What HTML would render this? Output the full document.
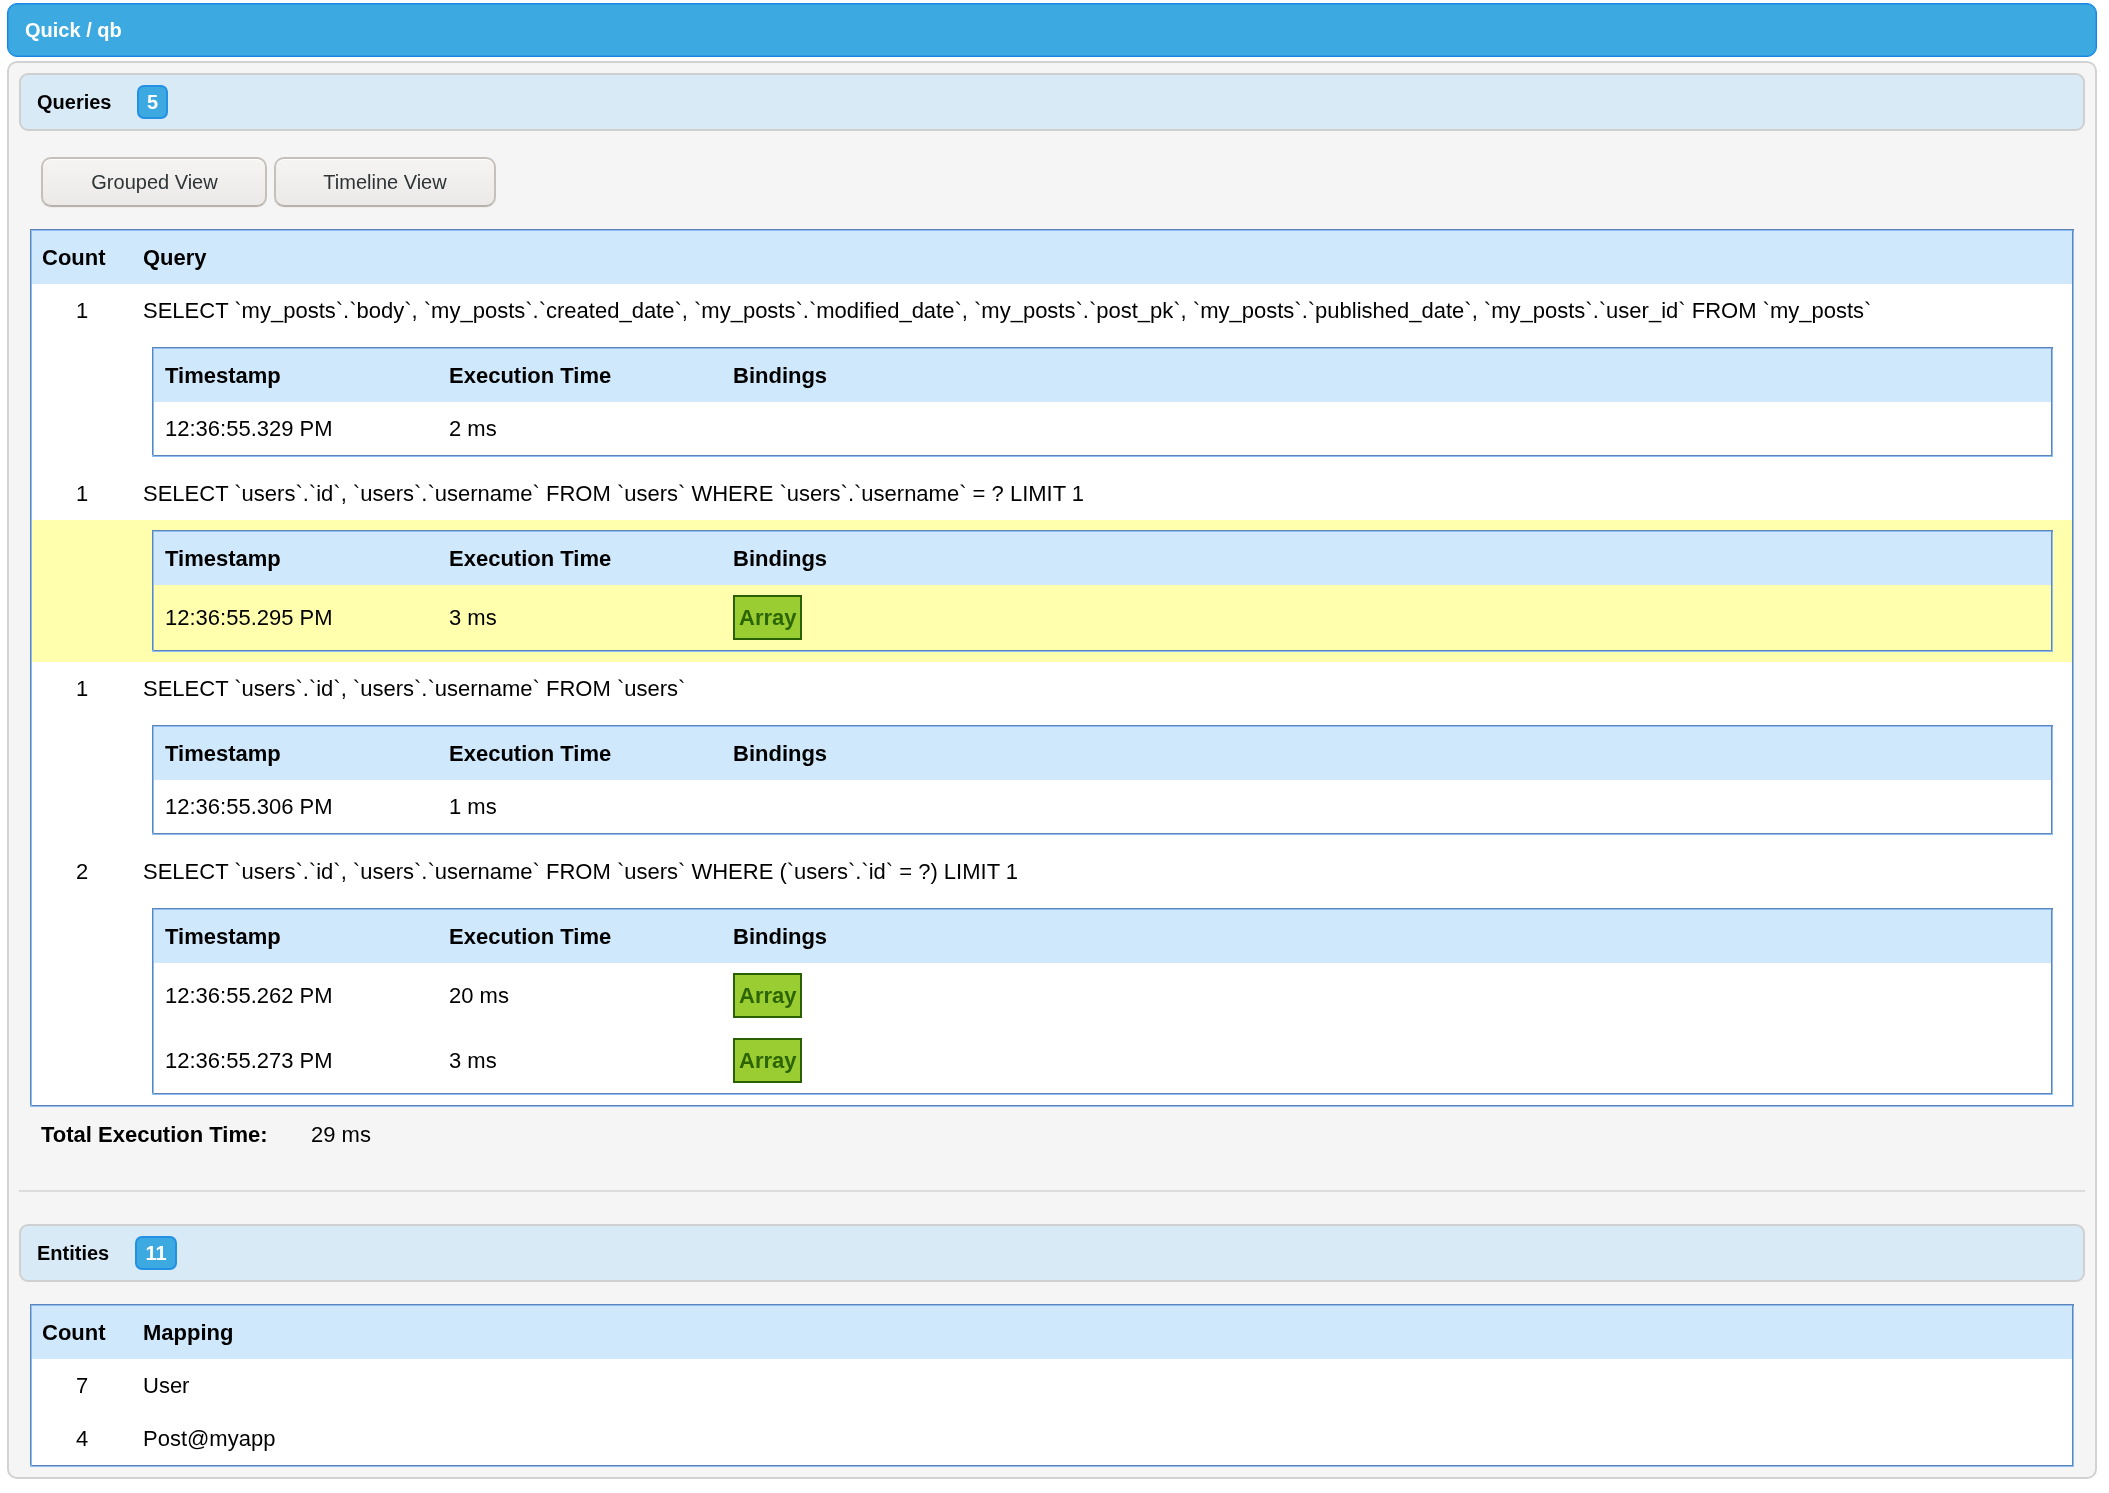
<!DOCTYPE html>
<html>
<head>
<meta charset="utf-8">
<style>
html,body{margin:0;padding:0;background:#fff;}
body{width:2109px;height:1493px;position:relative;overflow:hidden;font-family:"Liberation Sans",sans-serif;color:#000;}
.hdr{position:absolute;left:7px;top:3px;width:2088px;height:52px;border:1px solid #1785e3;border-radius:10px;background:#3ca9e1;box-shadow:inset 0 0 0 1px #2b9be3;}
.hdr span{position:absolute;left:17px;top:15px;font-size:20px;font-weight:bold;color:#fff;line-height:23px;}
.panel{position:absolute;left:7px;top:61px;width:2086px;height:1414px;border:2px solid #d2d2d2;border-radius:10px;background:#f5f5f5;}
.box{position:absolute;left:10px;width:2062px;height:54px;border:2px solid #d0d0d0;border-radius:9px;background:#d9eaf7;}
.box .t{position:absolute;left:16px;top:16px;font-size:20px;font-weight:bold;line-height:23px;}
.badge{position:absolute;top:10px;height:30px;border:2px solid #2390e6;border-radius:7px;background:#3ca9e1;color:#fff;font-size:20px;font-weight:bold;text-align:center;line-height:30px;}
.btn{position:absolute;top:94px;height:46px;border:2px solid #c6c0ba;border-bottom-color:#b9b1ab;border-radius:10px;background:linear-gradient(#f5f4f3,#ebeae8);color:#2e3436;font-size:20px;text-align:center;line-height:46px;box-shadow:inset 0 1px 0 #fff,0 1px 1px rgba(0,0,0,0.04);}
table{border-collapse:separate;border-spacing:0;font-size:22px;line-height:33px;}
table.o{position:absolute;left:22px;width:2042px;border:1px solid;border-color:#8dbdf5 #5f84b6 #5f84b6 #8dbdf5;box-shadow:-1px -1px 0 #5f84b6,1px 1px 0 #8dbdf5,1px -1px 0 #5f84b6,-1px 1px 0 #8dbdf5;background:#fff;}
th{font-weight:bold;text-align:left;background:#cfe8fc;padding:10px;}
td{padding:10px;vertical-align:baseline;}
table.o>tbody>tr>*:nth-child(2){padding-left:11px;}
td.c{text-align:center;width:80px;}
table.i{width:1899px;border:1px solid;border-color:#8dbdf5 #5f84b6 #5f84b6 #8dbdf5;box-shadow:-1px -1px 0 #5f84b6,1px 1px 0 #8dbdf5,1px -1px 0 #5f84b6,-1px 1px 0 #8dbdf5;margin:1px 0 1px 10px;background:#fff;}
table.i tr>*:nth-child(1){width:263px;padding-left:11px;}
table.i tr>*:nth-child(2){width:264px;padding-left:11px;}
table.i th, table.i td{padding:10px;}
tr.y td{background:#ffffad;}
.arr{display:inline-block;border:2px solid #2a6000;background:#9acd32;color:#2c6500;font-weight:bold;padding:4px;line-height:33px;vertical-align:baseline;}
.tot{position:absolute;left:32px;top:1055px;font-size:22px;line-height:33px;}
.sep{position:absolute;left:10px;top:1127px;width:2066px;height:2px;background:#dcdcdc;}
</style>
</head>
<body><div id="wrap" style="position:absolute;left:0;top:0;width:2109px;height:1493px;will-change:transform">
<div class="hdr"><span>Quick / qb</span></div>
<div class="panel">
  <div class="box" style="top:10px"><span class="t">Queries</span><span class="badge" style="left:116px;width:27px">5</span></div>
  <div class="btn" style="left:32px;width:222px;text-indent:1px">Grouped View</div>
  <div class="btn" style="left:265px;width:218px">Timeline View</div>
  <table class="o" style="top:167px">
    <tr><th style="width:80px">Count</th><th>Query</th></tr>
    <tr><td class="c">1</td><td>SELECT `my_posts`.`body`, `my_posts`.`created_date`, `my_posts`.`modified_date`, `my_posts`.`post_pk`, `my_posts`.`published_date`, `my_posts`.`user_id` FROM `my_posts`</td></tr>
    <tr><td></td><td>
      <table class="i"><tr><th>Timestamp</th><th>Execution Time</th><th>Bindings</th></tr>
      <tr><td>12:36:55.329 PM</td><td>2 ms</td><td></td></tr></table>
    </td></tr>
    <tr><td class="c">1</td><td>SELECT `users`.`id`, `users`.`username` FROM `users` WHERE `users`.`username` = ? LIMIT 1</td></tr>
    <tr class="y"><td></td><td>
      <table class="i"><tr><th>Timestamp</th><th>Execution Time</th><th>Bindings</th></tr>
      <tr><td>12:36:55.295 PM</td><td>3 ms</td><td><span class="arr">Array</span></td></tr></table>
    </td></tr>
    <tr><td class="c">1</td><td>SELECT `users`.`id`, `users`.`username` FROM `users`</td></tr>
    <tr><td></td><td>
      <table class="i"><tr><th>Timestamp</th><th>Execution Time</th><th>Bindings</th></tr>
      <tr><td>12:36:55.306 PM</td><td>1 ms</td><td></td></tr></table>
    </td></tr>
    <tr><td class="c">2</td><td>SELECT `users`.`id`, `users`.`username` FROM `users` WHERE (`users`.`id` = ?) LIMIT 1</td></tr>
    <tr><td></td><td>
      <table class="i"><tr><th>Timestamp</th><th>Execution Time</th><th>Bindings</th></tr>
      <tr><td>12:36:55.262 PM</td><td>20 ms</td><td><span class="arr">Array</span></td></tr>
      <tr><td>12:36:55.273 PM</td><td>3 ms</td><td><span class="arr">Array</span></td></tr></table>
    </td></tr>
  </table>
  <div class="tot"><b>Total Execution Time:</b></div>
  <div class="tot" style="left:302px">29 ms</div>
  <div class="sep"></div>
  <div class="box" style="top:1161px"><span class="t">Entities</span><span class="badge" style="left:114px;width:38px">11</span></div>
  <table class="o" style="top:1242px">
    <tr><th style="width:80px">Count</th><th>Mapping</th></tr>
    <tr><td class="c">7</td><td>User</td></tr>
    <tr><td class="c">4</td><td>Post@myapp</td></tr>
  </table>
</div>
</div></body>
</html>
